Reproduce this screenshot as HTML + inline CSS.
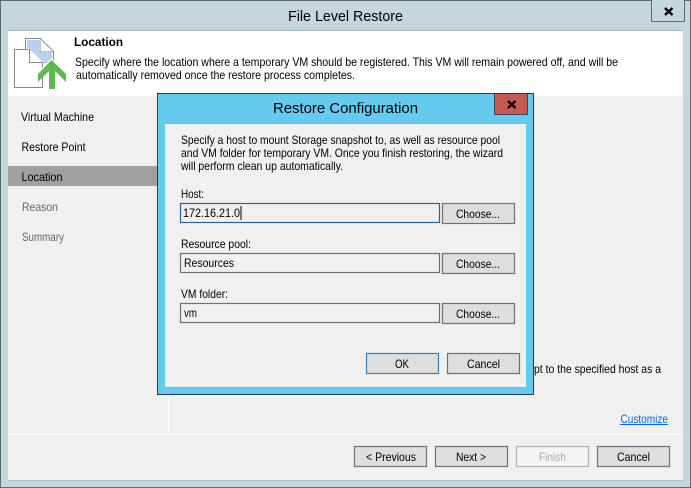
<!DOCTYPE html>
<html>
<head>
<meta charset="utf-8">
<title>File Level Restore</title>
<style>
html,body{margin:0;padding:0;background:#c5d6dc;width:691px;height:488px;overflow:hidden}
svg{display:block}
text{font-family:"Liberation Sans",sans-serif;font-size:12px;fill:#000;white-space:pre}
.g{fill:#666}
.d{fill:#a8a8a8}
.btn{fill:#dedede;stroke:#707070;stroke-width:1.2}
.inp{fill:#f0f0f0;stroke:#707070;stroke-width:1.2}
</style>
</head>
<body>
<svg width="691" height="488" viewBox="0 0 691 488" xmlns="http://www.w3.org/2000/svg">
<rect width="691" height="488" fill="#c5d6dc"/>
<rect x="0.5" y="0.5" width="690" height="487" fill="none" stroke="#5e6a72"/>
<rect x="8" y="30" width="675" height="1" fill="#a9bbc3"/>
<rect x="8" y="31" width="675" height="449" fill="#f0f0f0"/>
<rect x="8" y="480" width="675" height="1" fill="#aebfc6"/>
<rect x="8" y="31" width="675" height="65" fill="#fff"/>

<!-- title bar -->
<text x="288" y="21" style="font-size:15px" textLength="115" lengthAdjust="spacingAndGlyphs">File Level Restore</text>
<path d="M651.5 0V21.5H684.5V0" fill="#c5d6dc" stroke="#5e6a72"/>
<path d="M665 8L672.500 15M672.500 8L665 15" stroke="#000" stroke-width="2.400" fill="none"/>

<!-- header icon -->
<path d="M14.500 49.500H42.500V87.500H14.500Z" fill="#fff" stroke="#888"/>
<path d="M25.500 38.500H40.500L53.500 51.500V62.500H29.500V49.500H25.500Z" fill="#fff" stroke="#888"/>
<path d="M27 40H40V49H52V58L45 64L27 47Z" fill="#b8d2ee"/>
<path d="M40.500 39L53 51.500H40.500Z" fill="#fff" stroke="#999" stroke-dasharray="1 1"/>
<path d="M51.500 58.500L68 74V84L57 73V91H47V73L36 84V74Z" fill="#fff"/>
<path d="M51.500 60L66 74V82L55 71V89H49V71L38 82V74Z" fill="#5cb84f"/>

<!-- header text -->
<text x="74" y="46" style="font-weight:bold" textLength="49" lengthAdjust="spacingAndGlyphs">Location</text>
<text x="75" y="66" textLength="543" lengthAdjust="spacingAndGlyphs">Specify where the location where a temporary VM should be registered. This VM will remain powered off, and will be</text>
<text x="76" y="79" textLength="279" lengthAdjust="spacingAndGlyphs">automatically removed once the restore process completes.</text>

<!-- sidebar -->
<rect x="168" y="96" width="1" height="338" fill="#fff"/>
<rect x="8" y="434" width="675" height="1" fill="#fff"/>
<rect x="8" y="166" width="150" height="20" fill="#a0a0a0"/>
<text x="21" y="121" textLength="73" lengthAdjust="spacingAndGlyphs">Virtual Machine</text>
<text x="21.500" y="151" textLength="64" lengthAdjust="spacingAndGlyphs">Restore Point</text>
<text x="21.500" y="181" textLength="41" lengthAdjust="spacingAndGlyphs">Location</text>
<text x="22" y="211" class="g" textLength="36" lengthAdjust="spacingAndGlyphs">Reason</text>
<text x="22" y="241" class="g" textLength="42" lengthAdjust="spacingAndGlyphs">Summary</text>

<!-- behind dialog -->
<text x="534" y="373" textLength="127" lengthAdjust="spacingAndGlyphs">pt to the specified host as a</text>
<text x="620.500" y="423" style="fill:#0066ff" textLength="47.500" lengthAdjust="spacingAndGlyphs">Customize</text>
<rect x="620" y="424" width="48" height="1" fill="#0066ff"/>

<!-- bottom buttons -->
<rect class="btn" x="354.500" y="446.500" width="72" height="20"/>
<text x="366" y="461" textLength="50" lengthAdjust="spacingAndGlyphs">&lt; Previous</text>
<rect class="btn" x="435.500" y="446.500" width="72" height="20"/>
<text x="456" y="461" textLength="30" lengthAdjust="spacingAndGlyphs">Next &gt;</text>
<rect x="516.500" y="446.500" width="72" height="20" fill="#f4f4f4" stroke="#b0b0b0" stroke-width="1.200"/>
<text x="539" y="461" class="d" textLength="27" lengthAdjust="spacingAndGlyphs">Finish</text>
<rect class="btn" x="597.500" y="446.500" width="72" height="20"/>
<text x="617" y="461" textLength="33" lengthAdjust="spacingAndGlyphs">Cancel</text>

<!-- dialog -->
<rect x="157.500" y="93.500" width="376" height="301" fill="#65cbee" stroke="#2b3a45"/>
<rect x="165" y="123" width="361" height="1" fill="#85b4cc"/>
<rect x="165" y="124" width="361" height="263" fill="#f0f0f0"/>
<rect x="165" y="387" width="361" height="1" fill="#85b4cc"/>
<text x="273" y="113" style="font-size:15px" textLength="145" lengthAdjust="spacingAndGlyphs">Restore Configuration</text>
<path d="M494.500 94V114.500H527.500V94" fill="#c75a50" stroke="#3f4a50"/>
<path d="M508 101L515.500 108M515.500 101L508 108" stroke="#000" stroke-width="2.400" fill="none"/>

<text x="181" y="144" textLength="319" lengthAdjust="spacingAndGlyphs">Specify a host to mount Storage snapshot to, as well as resource pool</text>
<text x="181" y="157" textLength="322" lengthAdjust="spacingAndGlyphs">and VM folder for temporary VM. Once you finish restoring, the wizard</text>
<text x="181" y="170" textLength="162" lengthAdjust="spacingAndGlyphs">will perform clean up automatically.</text>

<text x="181" y="198" textLength="23" lengthAdjust="spacingAndGlyphs">Host:</text>
<rect x="180.500" y="203.500" width="259" height="19" fill="#f0f0f0" stroke="#2a6496" stroke-width="1.200"/>
<text x="183" y="217" textLength="57" lengthAdjust="spacingAndGlyphs">172.16.21.0</text>
<rect x="240.500" y="206" width="1" height="14" fill="#000"/>
<rect class="btn" x="442.500" y="203.500" width="72" height="20"/>
<text x="456" y="218" textLength="44" lengthAdjust="spacingAndGlyphs">Choose...</text>

<text x="181" y="248" textLength="70" lengthAdjust="spacingAndGlyphs">Resource pool:</text>
<rect class="inp" x="180.500" y="253.500" width="259" height="19"/>
<text x="184" y="267" textLength="50" lengthAdjust="spacingAndGlyphs">Resources</text>
<rect class="btn" x="442.500" y="253.500" width="72" height="20"/>
<text x="456" y="268" textLength="44" lengthAdjust="spacingAndGlyphs">Choose...</text>

<text x="181" y="298" textLength="47" lengthAdjust="spacingAndGlyphs">VM folder:</text>
<rect class="inp" x="180.500" y="303.500" width="259" height="19"/>
<text x="184" y="317" textLength="13" lengthAdjust="spacingAndGlyphs">vm</text>
<rect class="btn" x="442.500" y="303.500" width="72" height="20"/>
<text x="456" y="318" textLength="44" lengthAdjust="spacingAndGlyphs">Choose...</text>

<rect x="366.500" y="353.500" width="72" height="20" fill="#dedede" stroke="#3c7fb1" stroke-width="1.200"/>
<text x="395" y="368" textLength="14" lengthAdjust="spacingAndGlyphs">OK</text>
<rect class="btn" x="447.500" y="353.500" width="72" height="20"/>
<text x="467" y="368" textLength="33" lengthAdjust="spacingAndGlyphs">Cancel</text>
</svg>
</body>
</html>
